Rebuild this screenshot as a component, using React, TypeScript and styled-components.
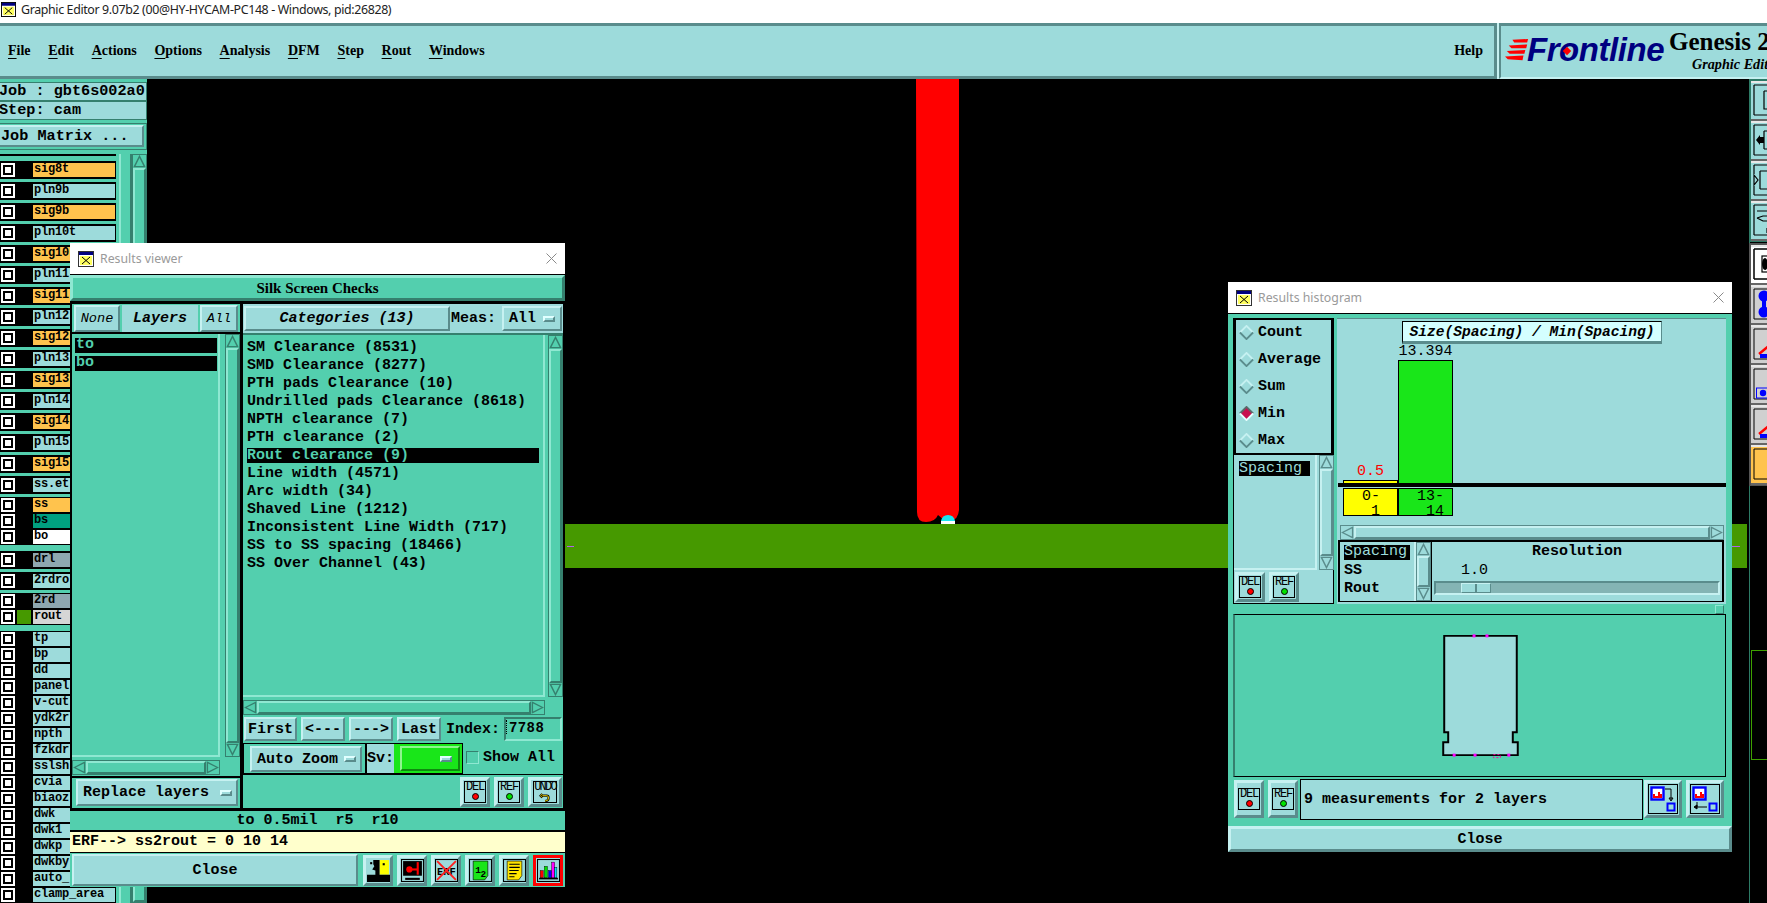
import type { ReactNode } from 'react';
import styled, { createGlobalStyle, css } from 'styled-components';

const PALE = '#9ddbdb';
const PALE_HI = '#c6f1f1';
const PALE_LO = '#5a8c8c';
const TEAL = '#53cfae';
const TEAL_HI = '#8fe8d2';
const TEAL_LO = '#35806e';
const MONO = '"Liberation Mono", monospace';
const SERIF = '"Liberation Serif", serif';

const raised = (hi: string, lo: string, w = 2) => css`
   border: ${w}px solid;
   border-color: ${hi} ${lo} ${lo} ${hi};
`;

type LayerRow = { name: string; fill: string; swatch?: string };

const ORANGE = '#ffc34d';
const SLATE = '#8ea7b0';

const layerGroups: { tight: boolean; rows: LayerRow[] }[] = [
   {
      tight: false,
      rows: [
         ['sig8t', ORANGE],
         ['pln9b', PALE],
         ['sig9b', ORANGE],
         ['pln10t', PALE],
         ['sig10', ORANGE],
         ['pln11', PALE],
         ['sig11', ORANGE],
         ['pln12', PALE],
         ['sig12', ORANGE],
         ['pln13', PALE],
         ['sig13', ORANGE],
         ['pln14', PALE],
         ['sig14', ORANGE],
         ['pln15', PALE],
         ['sig15', ORANGE],
         ['ss.et', PALE],
      ].map(([name, fill]) => ({ name, fill })),
   },
   {
      tight: true,
      rows: [
         { name: 'ss', fill: ORANGE },
         { name: 'bs', fill: '#00a080' },
         { name: 'bo', fill: '#ffffff' },
      ],
   },
   {
      tight: false,
      rows: [
         { name: 'drl', fill: SLATE },
         { name: '2rdro', fill: PALE },
      ],
   },
   {
      tight: true,
      rows: [
         { name: '2rd', fill: SLATE },
         { name: 'rout', fill: '#d6d6d6', swatch: '#469900' },
      ],
   },
   {
      tight: true,
      rows: [
         'tp', 'bp', 'dd', 'panel', 'v-cut', 'ydk2r', 'npth', 'fzkdr', 'sslsh',
         'cvia', 'biaoz', 'dwk', 'dwk1', 'dwkp', 'dwkby', 'auto_', 'clamp_area',
      ].map((name) => ({ name, fill: PALE })),
   },
];

const categories = [
   'SM Clearance (8531)',
   'SMD Clearance (8277)',
   'PTH pads Clearance (10)',
   'Undrilled pads Clearance (8618)',
   'NPTH clearance (7)',
   'PTH clearance (2)',
   'Rout clearance (9)',
   'Line width (4571)',
   'Arc width (34)',
   'Shaved Line (1212)',
   'Inconsistent Line Width (717)',
   'SS to SS spacing (18466)',
   'SS Over Channel (43)',
];

const menus = ['File', 'Edit', 'Actions', 'Options', 'Analysis', 'DFM', 'Step', 'Rout', 'Windows'];
const radios = ['Count', 'Average', 'Sum', 'Min', 'Max'];

export default function App() {
   return (
      <Screen>
         <GlobalStyle />
         <TitleBar>
            <AppIcon />
            <span>Graphic Editor 9.07b2 (00@HY-HYCAM-PC148 - Windows, pid:26828)</span>
         </TitleBar>

         <MenuRow>
            <MenuBar>
               {menus.map((m) => (
                  <MenuItem key={m}>
                     <u>{m[0]}</u>
                     {m.slice(1)}
                  </MenuItem>
               ))}
               <HelpItem>Help</HelpItem>
            </MenuBar>
            <LogoPanel>
               <LogoStripes />
               <LogoWord>Frontline</LogoWord>
               <LogoDot />
               <LogoProduct>
                  <strong>Genesis 2000</strong>
                  <em>Graphic Editor</em>
               </LogoProduct>
            </LogoPanel>
         </MenuRow>

         <Workspace>
            <LeftPanel>
               <JobBox>Job : gbt6s002a0</JobBox>
               <JobBox>Step: cam</JobBox>
               <MatrixWrap>
                  <MatrixButton>Job Matrix ...</MatrixButton>
               </MatrixWrap>
               <LayerArea>
                  <LayerList>
                     {layerGroups.map((g, i) => (
                        <LayerGroup key={i} $tight={g.tight}>
                           {g.rows.map((r) => (
                              <LayerItem key={r.name} $tight={g.tight}>
                                 <CheckBox />
                                 <SwatchSlot>{r.swatch && <Swatch $color={r.swatch} />}</SwatchSlot>
                                 <LayerLabel $fill={r.fill}>{r.name}</LayerLabel>
                              </LayerItem>
                           ))}
                        </LayerGroup>
                     ))}
                  </LayerList>
                  <LayerSash />
                  <LayerScroll>
                     <ArrowV up tone={TEAL} lo={TEAL_LO} />
                     <VThumb $hi={TEAL_HI} $lo={TEAL_LO} $bg={TEAL} />
                  </LayerScroll>
               </LayerArea>
            </LeftPanel>

            <Canvas>
               <BoardArt viewBox='147 79 1602 824'>
                  <rect x='500' y='524' width='1247' height='44' fill='#469900' />
                  <path d='M916 79H959V510Q958 520 951 520L944 519Q941 518 938 515Q935 522 926 522Q917 522 917 512Z' fill='#ff0000' />
                  <path d='M941 521Q942 515 948 515Q954 515 955 521Z' fill='#19e6f0' />
                  <rect x='941' y='521' width='14' height='3' fill='#ffffff' />
                  <rect x='567' y='546' width='7' height='1' fill='#b060f0' />
                  <rect x='1732' y='546' width='8' height='1' fill='#b060f0' />
               </BoardArt>
            </Canvas>

            <RightTools>
               <ToolGroup $edge='#2d7a66'>
                  {[0, 1, 2, 3].map((i) => (
                     <ToolButton key={i} $bg={PALE}>
                        <ToolGlyph kind={i} />
                     </ToolButton>
                  ))}
               </ToolGroup>
               <ToolGroup $edge='#555555'>
                  <ToolButton $bg='#ffffff'>
                     <ToolGlyph kind={4} />
                  </ToolButton>
                  <ToolButton $bg='#d0d0d0'>
                     <ToolGlyph kind={5} />
                  </ToolButton>
                  <ToolButton $bg='#d0d0d0'>
                     <ToolGlyph kind={6} />
                  </ToolButton>
                  <ToolButton $bg='#d0d0d0'>
                     <ToolGlyph kind={7} />
                  </ToolButton>
                  <ToolButton $bg='#d0d0d0'>
                     <ToolGlyph kind={6} />
                  </ToolButton>
                  <ToolButton $bg={ORANGE}>
                     <ToolGlyph kind={8} />
                  </ToolButton>
               </ToolGroup>
               <GreenOutline />
            </RightTools>
         </Workspace>

         <ViewerWindow>
            <WinTitle>
               <WinIcon />
               <span>Results viewer</span>
               <CloseX />
            </WinTitle>
            <ViewerHeader>Silk Screen Checks</ViewerHeader>
            <ViewerMain>
               <LayersColumn>
                  <LayersBar>
                     <SmallButton $w={46}>None</SmallButton>
                     <LayersTitle>Layers</LayersTitle>
                     <SmallButton $w={38}>All</SmallButton>
                  </LayersBar>
                  <LayersBody>
                     <SunkenList>
                        <SelectedLayer>to</SelectedLayer>
                        <SelectedLayer>bo</SelectedLayer>
                     </SunkenList>
                     <VScroll tone={TEAL} hi={TEAL_HI} lo={TEAL_LO} />
                     <HScroll tone={TEAL} hi={TEAL_HI} lo={TEAL_LO} />
                  </LayersBody>
                  <ReplaceRow>
                     <DropButton $bg={PALE}>
                        Replace layers
                        <DropMark />
                     </DropButton>
                  </ReplaceRow>
               </LayersColumn>

               <CategoryColumn>
                  <CategoryBar>
                     <CategoryTitle>Categories (13)</CategoryTitle>
                     <MeasLabel>Meas:</MeasLabel>
                     <MeasButton>
                        All
                        <DropMark />
                     </MeasButton>
                  </CategoryBar>
                  <CategoryBody>
                     <CategoryList>
                        {categories.map((c) => (
                           <CategoryItem key={c} $active={c.startsWith('Rout')}>
                              {c}
                           </CategoryItem>
                        ))}
                     </CategoryList>
                     <VScroll tone={TEAL} hi={TEAL_HI} lo={TEAL_LO} />
                     <HScroll tone={TEAL} hi={TEAL_HI} lo={TEAL_LO} />
                  </CategoryBody>
                  <NavRow>
                     <NavButton>First</NavButton>
                     <NavButton>&lt;---</NavButton>
                     <NavButton>---&gt;</NavButton>
                     <NavButton>Last</NavButton>
                     <IndexLabel>Index:</IndexLabel>
                     <IndexField>7788</IndexField>
                  </NavRow>
                  <ZoomRow>
                     <ZoomGroup>
                        <ZoomCell>
                           <DropButton $bg={PALE}>
                              Auto Zoom
                              <DropMark />
                           </DropButton>
                        </ZoomCell>
                        <SvLabel>Sv:</SvLabel>
                        <SvCell>
                           <SvButton>
                              <DropMark />
                           </SvButton>
                        </SvCell>
                     </ZoomGroup>
                     <ShowBox />
                     <ShowLabel>Show All</ShowLabel>
                  </ZoomRow>
                  <ActionRow>
                     <ActionButton label='DEL' dot='#ff0000' />
                     <ActionButton label='REF' dot='#00e000' />
                     <ActionButton label='UNDO' />
                  </ActionRow>
               </CategoryColumn>
            </ViewerMain>
            <StatusBand>to 0.5mil  r5  r10</StatusBand>
            <ErfBand>ERF--&gt; ss2rout = 0 10 14</ErfBand>
            <ViewerFooter>
               <FooterClose>Close</FooterClose>
               <IconButton><FaceIcon /></IconButton>
               <IconButton><ProbeIcon /></IconButton>
               <IconButton><ErfIcon /></IconButton>
               <IconButton><PageIcon /></IconButton>
               <IconButton><NoteIcon /></IconButton>
               <IconButton $active><BarsIcon /></IconButton>
            </ViewerFooter>
         </ViewerWindow>

         <HistogramWindow>
            <WinTitle>
               <WinIcon />
               <span>Results histogram</span>
               <CloseX />
            </WinTitle>
            <HistBody>
               <HistUpper>
                  <HistSide>
                     <RadioBox>
                        {radios.map((r) => (
                           <RadioRow key={r}>
                              <Diamond on={r === 'Min'} />
                              {r}
                           </RadioRow>
                        ))}
                     </RadioBox>
                     <SideList>
                        <SideListInner>
                           <SideSelected>Spacing</SideSelected>
                        </SideListInner>
                        <VScroll tone={PALE} hi={PALE_HI} lo={PALE_LO} />
                     </SideList>
                     <SideActions>
                        <ActionButton label='DEL' dot='#ff0000' />
                        <ActionButton label='REF' dot='#00e000' />
                     </SideActions>
                  </HistSide>

                  <HistMain>
                     <ChartTitle>Size(Spacing) / Min(Spacing)</ChartTitle>
                     <Plot>
                        <PlotColumn>
                           <PlotValue $color='#ff0000'>0.5</PlotValue>
                           <PlotBar $color='#ffff00' $h={3} />
                        </PlotColumn>
                        <PlotColumn>
                           <PlotValue $color='#000000'>13.394</PlotValue>
                           <PlotBar $color='#19e619' $h={123} />
                        </PlotColumn>
                     </Plot>
                     <Axis />
                     <BinRow>
                        <BinCell $color='#ffff00'>{'0-\n 1'}</BinCell>
                        <BinCell $color='#19e619'>{'13-\n 14'}</BinCell>
                     </BinRow>
                     <HistHScroll>
                        <HScroll tone={PALE} hi={PALE_HI} lo={PALE_LO} />
                     </HistHScroll>
                     <HistLower>
                        <ViewList>
                           <ViewSelected>Spacing</ViewSelected>
                           <ViewItem>SS</ViewItem>
                           <ViewItem>Rout</ViewItem>
                        </ViewList>
                        <VScroll tone={PALE} hi={PALE_HI} lo={PALE_LO} />
                        <ResolutionBox>
                           <ResolutionTitle>Resolution</ResolutionTitle>
                           <ResolutionValue>1.0</ResolutionValue>
                           <SliderTrack>
                              <SliderThumb />
                           </SliderTrack>
                        </ResolutionBox>
                     </HistLower>
                  </HistMain>
               </HistUpper>

               <Sash>
                  <SashHandle />
               </Sash>

               <Preview>
                  <PreviewArt viewBox='1233 615 492 162'>
                     <path
                        d='M1443 636H1516V733H1512V743H1517V756H1442V743H1447V733H1443Z'
                        fill={PALE}
                        stroke='#000000'
                        strokeWidth='2'
                     />
                     {[[1473, 636], [1486, 636], [1453, 756], [1474, 756], [1508, 756]].map(([x, y]) => (
                        <rect key={x} x={x - 1.5} y={y - 1.5} width='3' height='3' fill='#ff00ff' />
                     ))}
                     <rect x='1492.5' y='755.5' width='7' height='3' fill='none' stroke='#ff00a0' strokeWidth='1' strokeDasharray='2 2' />
                  </PreviewArt>
               </Preview>

               <HistStatus>
                  <ActionButton label='DEL' dot='#ff0000' tall />
                  <ActionButton label='REF' dot='#00e000' tall />
                  <MessageBox>9 measurements for 2 layers</MessageBox>
                  <IconButton $tall><SwapIcon dir='down' /></IconButton>
                  <IconButton $tall><SwapIcon dir='up' /></IconButton>
               </HistStatus>
            </HistBody>
            <HistClose>Close</HistClose>
         </HistogramWindow>
      </Screen>
   );
}

/* small drawings */

function AppIcon() {
   return (
      <WinIconSvg viewBox='0 0 16 16' $size={15}>
         <rect x='0.5' y='0.5' width='15' height='15' fill='#ffffff' stroke='#000000' />
         <rect x='1' y='1' width='14' height='3' fill='#000080' />
         <rect x='2' y='5' width='12' height='9' fill='#ffff60' />
         <path d='M4 6L12 13M12 6L4 13' stroke='#000000' strokeWidth='1' />
      </WinIconSvg>
   );
}

function WinIcon() {
   return (
      <WinIconSvg viewBox='0 0 16 16' $size={16}>
         <rect x='0.5' y='0.5' width='15' height='15' fill='#ffffff' stroke='#333333' />
         <rect x='1' y='1' width='14' height='3' fill='#000080' />
         <rect x='2' y='5' width='12' height='9' fill='#ffff60' />
         <path d='M4 6L12 13M12 6L4 13' stroke='#000000' strokeWidth='1' />
      </WinIconSvg>
   );
}

function CloseX() {
   return (
      <CloseSvg viewBox='0 0 11 11'>
         <path d='M0.5 0.5L10.5 10.5M10.5 0.5L0.5 10.5' stroke='#8a8a8a' strokeWidth='1' fill='none' />
      </CloseSvg>
   );
}

function LogoStripes() {
   return (
      <StripeSvg viewBox='0 0 26 24'>
         <path d='M8 1L25 0L24 4L10 4Z M4 7L24 6L23 10L7 10Z M2 13L22 12L21 16L5 16Z M0 19L20 18L19 23L3 22Z' fill='#ff0000' />
      </StripeSvg>
   );
}

function ArrowV({ up, tone, lo }: { up?: boolean; tone: string; lo: string }) {
   return (
      <ArrowSvgV viewBox='0 0 14 14' $tone={tone}>
         <path
            d={up ? 'M7 1.5L12.5 12.5H1.5Z' : 'M7 12.5L1.5 1.5H12.5Z'}
            fill={tone}
            stroke={lo}
            strokeWidth='1.5'
         />
      </ArrowSvgV>
   );
}

function ArrowH({ left, tone, lo }: { left?: boolean; tone: string; lo: string }) {
   return (
      <ArrowSvgH viewBox='0 0 14 14' $tone={tone}>
         <path
            d={left ? 'M1.5 7L12.5 1.5V12.5Z' : 'M12.5 7L1.5 1.5V12.5Z'}
            fill={tone}
            stroke={lo}
            strokeWidth='1.5'
         />
      </ArrowSvgH>
   );
}

type ScrollProps = { tone: string; hi: string; lo: string };

function VScroll({ tone, hi, lo }: ScrollProps) {
   return (
      <VScrollBox $bg={tone} $lo={lo}>
         <ArrowV up tone={tone} lo={lo} />
         <VThumb $hi={hi} $lo={lo} $bg={tone} />
         <ArrowV tone={tone} lo={lo} />
      </VScrollBox>
   );
}

function HScroll({ tone, hi, lo }: ScrollProps) {
   return (
      <HScrollBox $bg={tone} $lo={lo}>
         <ArrowH left tone={tone} lo={lo} />
         <HThumb $hi={hi} $lo={lo} $bg={tone} />
         <ArrowH tone={tone} lo={lo} />
      </HScrollBox>
   );
}

function Diamond({ on }: { on: boolean }) {
   return (
      <DiamondSvg viewBox='0 0 16 16'>
         <path d='M8 1L15 8L8 15L1 8Z' fill={on ? '#c8104e' : PALE} />
         <path d='M1 8L8 1L15 8' fill='none' stroke={on ? '#5a6a6a' : PALE_HI} strokeWidth='2' />
         <path d='M1 8L8 15L15 8' fill='none' stroke={on ? '#e8ffff' : PALE_LO} strokeWidth='2' />
      </DiamondSvg>
   );
}

function ActionButton({ label, dot, tall }: { label: string; dot?: string; tall?: boolean }) {
   return (
      <ActionOuter $tall={tall} $wide={label === 'UNDO'}>
         <ActionInner>
            <ActionText $tight={label === 'UNDO'}>{label}</ActionText>
            {dot ? (
               <ActionDot $color={dot} />
            ) : (
               <svg width='12' height='10' viewBox='0 0 12 10'>
                  <path d='M3 3H8Q10 3 10 5.5Q10 9 6 9M3 1L1 3L3 5' fill='none' stroke='#000000' strokeWidth='2.4' />
                  <path d='M3 3H8Q10 3 10 5.5Q10 9 6 9M3 1L1 3L3 5' fill='none' stroke='#ffe000' strokeWidth='1' />
               </svg>
            )}
         </ActionInner>
      </ActionOuter>
   );
}

function FaceIcon() {
   return (
      <IconSvg viewBox='0 0 22 22'>
         <rect x='0' y='0' width='22' height='15' fill={PALE} />
         <rect x='12' y='1' width='9' height='14' fill='#ffff00' />
         <path d='M6 1H12V15H8V11L5 10L7 7L6 5Z M0 15H22V22H0Z' fill='#000000' />
         <rect x='3' y='3' width='2' height='2' fill='#000000' />
         <rect x='15' y='4' width='2' height='2' fill='#000000' />
      </IconSvg>
   );
}

function ProbeIcon() {
   return (
      <IconSvg viewBox='0 0 22 22'>
         <rect x='0.5' y='0.5' width='21' height='21' fill={PALE} stroke='#000000' />
         <rect x='2' y='2' width='18' height='14' fill='#000000' />
         <circle cx='8' cy='10' r='3' fill='#ff0000' />
         <rect x='8' y='9' width='8' height='2' fill='#ff0000' />
         <rect x='15' y='3' width='2' height='12' fill='#ff0000' />
         <rect x='4' y='18' width='14' height='2' fill='#000000' />
      </IconSvg>
   );
}

function ErfIcon() {
   return (
      <IconSvg viewBox='0 0 22 22'>
         <rect x='0.5' y='0.5' width='21' height='21' fill={PALE} stroke='#000000' />
         <IconText x='11' y='15' fontSize='10' textAnchor='middle'>ERF</IconText>
         <path d='M2 2L20 20M20 2L2 20' stroke='#ff2020' strokeWidth='1.8' />
      </IconSvg>
   );
}

function PageIcon() {
   return (
      <IconSvg viewBox='0 0 22 22'>
         <rect x='0.5' y='0.5' width='21' height='21' fill={PALE} stroke='#000000' />
         <path d='M4 2H18V16L15 20H4Z' fill='#19e619' stroke='#000000' strokeWidth='0.6' />
         <IconText x='6' y='13' fontSize='9' fontWeight='700'>1</IconText>
         <IconText x='11' y='17' fontSize='9' fontWeight='700'>2</IconText>
      </IconSvg>
   );
}

function NoteIcon() {
   return (
      <IconSvg viewBox='0 0 22 22'>
         <rect x='0.5' y='0.5' width='21' height='21' fill={PALE} stroke='#000000' />
         <path d='M4 2H18V16L15 20H4Z' fill='#ffe600' stroke='#000000' strokeWidth='0.6' />
         <path d='M6 5H16M6 8H16M6 11H15M6 14H13M6 17H11' stroke='#000000' strokeWidth='1' />
      </IconSvg>
   );
}

function BarsIcon() {
   return (
      <IconSvg viewBox='0 0 22 22'>
         <rect x='0.5' y='0.5' width='21' height='21' fill={PALE} stroke='#000000' />
         <rect x='3' y='11' width='3' height='7' fill='#ff0000' stroke='#000000' strokeWidth='0.4' />
         <rect x='7' y='7' width='3' height='11' fill='#00e000' stroke='#000000' strokeWidth='0.4' />
         <rect x='11' y='11' width='3' height='7' fill='#0000ff' stroke='#000000' strokeWidth='0.4' />
         <rect x='14' y='3' width='3' height='15' fill='#ff00ff' stroke='#000000' strokeWidth='0.4' />
         <rect x='17' y='8' width='2' height='10' fill='#00e0ff' stroke='#000000' strokeWidth='0.4' />
         <rect x='2' y='18' width='18' height='1.5' fill='#000000' />
      </IconSvg>
   );
}

function SwapIcon({ dir }: { dir: 'down' | 'up' }) {
   return (
      <SwapSvg viewBox='0 0 30 30'>
         <rect x='0.5' y='0.5' width='29' height='29' fill={PALE} stroke='#000000' />
         <rect x='3.5' y='3.5' width='12' height='12' fill='#ffffff' stroke='#0000ff' strokeWidth='2.4' />
         <path d='M5 14V10H7V12H10V8H12V10H14V14Z' fill='#ff0000' />
         <rect x='19.5' y='19.5' width='7' height='7' fill='none' stroke='#0000ff' strokeWidth='2' />
         {dir === 'down' ? (
            <path d='M17 5H23V16M21 14H25L23 17Z' fill='none' stroke='#000000' strokeWidth='1' />
         ) : (
            <path d='M7 23H17M7 21V25L4 23Z M7 18V23' fill='#000000' stroke='#000000' strokeWidth='1' />
         )}
      </SwapSvg>
   );
}

function ToolGlyph({ kind }: { kind: number }) {
   const glyphs: ReactNode[] = [
      <path key='a' d='M1 1H18M1 1V31M1 31H18M11 7H18M11 7V25H18' fill='none' stroke='#000000' strokeWidth='1.2' />,
      <g key='b'>
         <path d='M1 1H18M1 31H18M1 1V31M11 7H18M11 25H18M11 7V25' fill='none' stroke='#000000' strokeWidth='1.2' />
         <path d='M3 16L7 11V13H11V19H7V21Z' fill='#000000' />
      </g>,
      <path key='c' d='M1 1H18M1 31H18M1 1V10M1 22V31M7 7H18M7 25H18M7 7V25M1 11L5 16L1 21Z' fill='none' stroke='#000000' strokeWidth='1.2' />,
      <path key='d' d='M1 1H18M1 31H18M1 1V31M4 7H18M4 14L10 12H18M4 14L10 17H18M14 24V29' fill='none' stroke='#000000' strokeWidth='1.2' />,
      <g key='e'>
         <path d='M1 1H18M1 31H18M1 1V31' fill='none' stroke='#000000' strokeWidth='1.5' />
         <rect x='9' y='8' width='9' height='16' fill='none' stroke='#000000' strokeWidth='1.2' />
         <ellipse cx='12' cy='16' rx='3' ry='6' fill='#000000' />
      </g>,
      <g key='f'>
         <path d='M1 1H18M1 31H18M1 1V31' fill='none' stroke='#000000' strokeWidth='1' />
         <circle cx='11' cy='8' r='5.5' fill='#0000ff' />
         <circle cx='11' cy='24' r='5.5' fill='#0000ff' />
         <rect x='9' y='8' width='4' height='16' fill='#0000ff' />
      </g>,
      <g key='g'>
         <path d='M1 1H18M1 31H18M1 1V31' fill='none' stroke='#000000' strokeWidth='1' />
         <path d='M6 26L18 16' stroke='#ff0000' strokeWidth='2.4' />
         <rect x='7' y='26' width='11' height='4' fill='#0000ff' />
      </g>,
      <g key='h'>
         <path d='M1 1H18M1 31H18M1 1V31' fill='none' stroke='#000000' strokeWidth='1' />
         <rect x='3.5' y='20' width='15' height='10' fill='none' stroke='#0000ff' strokeWidth='1' />
         <circle cx='10' cy='25' r='3.2' fill='#0000ff' />
      </g>,
      <g key='i'>
         <path d='M1 1H18M1 31H18M1 1V31' fill='none' stroke='#000000' strokeWidth='1' />
         <rect x='14' y='9' width='3' height='12' fill='#000000' />
      </g>,
   ];
   return <ToolSvg viewBox='0 0 18 34'>{glyphs[kind]}</ToolSvg>;
}

/* page */

const GlobalStyle = createGlobalStyle`
   * {
      box-sizing: border-box;
   }

   html,
   body {
      margin: 0;
      background: #000000;
      overflow: hidden;
   }
`;

const Screen = styled.div`
   position: relative;
   width: 1767px;
   height: 903px;
   display: flex;
   flex-direction: column;
   overflow: hidden;
   background: #000000;
   font-family: ${MONO};
   font-weight: 700;
   color: #000000;
`;

const TitleBar = styled.header`
   height: 23px;
   flex: none;
   display: flex;
   align-items: center;
   gap: 5px;
   padding: 0 0 5px 1px;
   background: #ffffff;
   font-family: 'Noto Sans', sans-serif;
   font-size: 12.4px;
   font-weight: 400;
   letter-spacing: -0.36px;
   color: #222222;
`;

const WinIconSvg = styled.svg<{ $size: number }>`
   width: ${(p) => p.$size}px;
   height: ${(p) => p.$size}px;
   flex: none;
`;

const MenuRow = styled.div`
   height: 56px;
   flex: none;
   display: flex;
   background: ${PALE_HI};
`;

const MenuBar = styled.nav`
   width: 1497px;
   flex: none;
   display: flex;
   align-items: center;
   gap: 17.7px;
   padding: 0 11px 0 8px;
   background: ${PALE};
   border: 3px solid ${PALE_LO};
   border-left: 0;
   border-bottom-width: 3px;
   font-family: ${SERIF};
   font-size: 14px;
   font-weight: 700;
`;

const MenuItem = styled.span`
   u {
      text-underline-offset: 3px;
      text-decoration-thickness: 1px;
   }
`;

const HelpItem = styled.span`
   margin-left: auto;
`;

const LogoPanel = styled.div`
   position: relative;
   flex: 1;
   display: flex;
   align-items: center;
   margin-left: 2px;
   padding-left: 4px;
   overflow: hidden;
   background: ${PALE};
   border-top: 3px solid ${PALE_LO};
   border-left: 2px solid ${PALE_LO};
   border-bottom: 2px solid ${PALE_HI};
`;

const StripeSvg = styled.svg`
   width: 24px;
   height: 24px;
   flex: none;
   margin-bottom: 3px;
`;

const LogoWord = styled.span`
   width: 141px;
   flex: none;
   margin: 0 0 3px -2px;
   font-family: 'Liberation Sans', sans-serif;
   font-size: 33px;
   font-weight: 700;
   font-style: italic;
   letter-spacing: -0.45px;
   color: #000080;
   white-space: nowrap;
`;

const LogoDot = styled.i`
   position: absolute;
   left: 63px;
   top: 22px;
   width: 6px;
   height: 6px;
   background: #ff0000;
   transform: rotate(45deg);
`;

const LogoProduct = styled.div`
   flex: none;
   margin: 0 0 2px 1px;
   font-family: ${SERIF};
   white-space: nowrap;

   strong {
      display: block;
      font-size: 25px;
      line-height: 26px;
   }

   em {
      display: block;
      margin-left: 23px;
      font-size: 14.2px;
      line-height: 18px;
      font-weight: 700;
   }
`;

const Workspace = styled.main`
   flex: 1;
   display: flex;
   min-height: 0;
`;

/* left layer panel */

const LeftPanel = styled.aside`
   width: 147px;
   flex: none;
   display: flex;
   flex-direction: column;
   padding-top: 3px;
   overflow: hidden;
   background: ${TEAL};
`;

const JobBox = styled.div`
   height: 19px;
   flex: none;
   padding-left: 0;
   text-indent: -1px;
   background: ${PALE};
   border: 1px solid ${TEAL_LO};
   border-left: 0;
   font-size: 15.2px;
   line-height: 17px;
   white-space: pre;
`;

const MatrixWrap = styled.div`
   height: 27px;
   flex: none;
   margin-top: 3px;
   padding: 1px 2px 2px 0;
   border: 1px solid ${TEAL_LO};
   border-left: 0;
`;

const MatrixButton = styled.div`
   height: 100%;
   padding-left: 1px;
   background: ${PALE};
   ${raised(PALE_HI, PALE_LO)}
   border-left: 0;
   font-size: 15.2px;
   line-height: 19px;
`;

const LayerArea = styled.div`
   flex: 1;
   min-height: 0;
   display: flex;
   margin-top: 4px;
`;

const LayerList = styled.div`
   width: 116px;
   flex: none;
   display: flex;
   flex-direction: column;
   gap: 3px;
   padding-top: 5px;
   border-top: 2px solid #000000;
`;

const LayerGroup = styled.div<{ $tight: boolean }>`
   display: flex;
   flex-direction: column;
   gap: ${(p) => (p.$tight ? 0 : 3)}px;
   margin-bottom: ${(p) => (p.$tight ? 3 : 0)}px;
`;

const LayerItem = styled.div<{ $tight: boolean }>`
   height: ${(p) => (p.$tight ? 16 : 18)}px;
   flex: none;
   display: flex;
   align-items: center;
   padding-left: 1px;
   background: #000000;
`;

const CheckBox = styled.span`
   width: 14px;
   height: 14px;
   flex: none;
   background: #ffffff;
   border: 2px solid #ffffff;
   box-shadow: inset 0 0 0 2px #000000;
`;

const SwatchSlot = styled.span`
   width: 18px;
   height: 100%;
   flex: none;
   display: flex;
   align-items: center;
   padding-left: 2px;
`;

const Swatch = styled.span<{ $color: string }>`
   width: 14px;
   height: 14px;
   background: ${(p) => p.$color};
`;

const LayerLabel = styled.span<{ $fill: string }>`
   flex: 1;
   height: 14px;
   margin-right: 1px;
   overflow: hidden;
   padding-left: 1px;
   background: ${(p) => p.$fill};
   font-size: 12px;
   line-height: 13px;
   letter-spacing: -0.2px;
   white-space: nowrap;
`;

const LayerSash = styled.div`
   width: 13px;
   flex: none;
   margin-left: 3px;
   background: ${TEAL};
   border-left: 2px solid ${TEAL_HI};
   border-right: 2px solid ${TEAL_LO};
`;

const LayerScroll = styled.div`
   flex: 1;
   display: flex;
   flex-direction: column;
   background: #45b094;
   border: 1px solid ${TEAL_LO};
`;

/* canvas */

const Canvas = styled.div`
   position: relative;
   flex: 1;
   min-width: 0;
   background: #000000;
`;

const BoardArt = styled.svg`
   position: absolute;
   inset: 0;
   width: 100%;
   height: 100%;
`;

/* right tool column */

const RightTools = styled.aside`
   width: 18px;
   flex: none;
   display: flex;
   flex-direction: column;
   background: #000000;
   border-left: 1px solid #2d7a66;
`;

const ToolGroup = styled.div<{ $edge: string }>`
   flex: none;
   display: flex;
   flex-direction: column;
   margin-left: -1px;
   padding: 2px 0 1px 2px;
   background: ${(p) => p.$edge};
   margin-bottom: 1px;
`;

const ToolButton = styled.div<{ $bg: string }>`
   height: 40px;
   display: flex;
   align-items: center;
   padding-left: 2px;
   background: ${(p) => p.$bg};
   border-top: 2px solid #e8e8e8;
   border-bottom: 2px solid #666666;
`;

const ToolSvg = styled.svg`
   width: 18px;
   height: 34px;
   flex: none;
`;

const GreenOutline = styled.div`
   height: 110px;
   margin-top: 163px;
   margin-left: 1px;
   border: 1px solid #3ea000;
   border-right: 0;
`;

/* floating windows */

const ViewerWindow = styled.section`
   position: absolute;
   left: 70px;
   top: 243px;
   width: 495px;
   height: 644px;
   display: flex;
   flex-direction: column;
   background: #000000;
`;

const HistogramWindow = styled.section`
   position: absolute;
   left: 1228px;
   top: 282px;
   width: 504px;
   height: 570px;
   display: flex;
   flex-direction: column;
   background: #000000;
`;

const WinTitle = styled.div`
   height: 31px;
   flex: none;
   display: flex;
   align-items: center;
   gap: 6px;
   padding: 0 8px;
   background: #ffffff;
   font-family: 'Noto Sans', sans-serif;
   font-size: 12.3px;
   font-weight: 400;
   color: #9a9a9a;
`;

const CloseSvg = styled.svg`
   width: 11px;
   height: 11px;
   margin-left: auto;
`;

const ViewerHeader = styled.div`
   height: 26px;
   flex: none;
   margin-top: 1px;
   display: flex;
   align-items: center;
   justify-content: center;
   background: ${TEAL};
   ${raised(TEAL_HI, TEAL_LO, 3)}
   font-family: ${SERIF};
   font-size: 15px;
`;

const ViewerMain = styled.div`
   height: 504px;
   flex: none;
   margin-top: 3px;
   display: grid;
   grid-template-columns: 168px 320px;
   gap: 3px;
   padding: 0 2px;
   background: #000000;
`;

const LayersColumn = styled.div`
   display: flex;
   flex-direction: column;
   background: ${TEAL};
`;

const LayersBar = styled.div`
   height: 30px;
   flex: none;
   display: flex;
   align-items: stretch;
   background: ${TEAL};
   border-bottom: 2px solid #000000;
   padding-top: 1px;
`;

const SmallButton = styled.div<{ $w: number }>`
   width: ${(p) => p.$w}px;
   flex: none;
   display: flex;
   align-items: center;
   justify-content: center;
   margin-left: 2px;
   background: ${PALE};
   ${raised(PALE_HI, PALE_LO)}
   font-weight: 400;
   font-style: italic;
   font-size: 13.6px;
`;

const LayersTitle = styled.div`
   width: 76px;
   flex: none;
   margin-left: 2px;
   display: flex;
   align-items: center;
   justify-content: center;
   background: ${PALE};
   font-style: italic;
   font-size: 15px;
`;

const LayersBody = styled.div`
   height: 442px;
   flex: none;
   display: grid;
   grid-template-columns: 148px 15px;
   grid-template-rows: 423px 15px;
   column-gap: 5px;
   row-gap: 3px;
   padding: 0 0 1px 0;
`;

const SunkenList = styled.div`
   display: flex;
   flex-direction: column;
   gap: 3px;
   padding: 4px 1px 4px 3px;
   background: ${TEAL};
   border-right: 2px solid ${TEAL_HI};
   border-bottom: 2px solid ${TEAL_HI};
`;

const SelectedLayer = styled.div`
   height: 15px;
   flex: none;
   padding-left: 1px;
   background: #000000;
   color: ${TEAL};
   font-size: 15px;
   line-height: 14px;
`;

const VScrollBox = styled.div<{ $bg: string; $lo: string }>`
   display: flex;
   flex-direction: column;
   align-items: stretch;
   min-height: 0;
   background: ${(p) => p.$bg};
   border: 1px solid ${(p) => p.$lo};
`;

const HScrollBox = styled.div<{ $bg: string; $lo: string }>`
   display: flex;
   align-items: stretch;
   min-width: 0;
   height: 15px;
   background: ${(p) => p.$bg};
   border: 1px solid ${(p) => p.$lo};
`;

const VThumb = styled.div<{ $hi: string; $lo: string; $bg: string }>`
   flex: 1;
   min-height: 0;
   background: ${(p) => p.$bg};
   ${(p) => raised(p.$hi, p.$lo)}
`;

const HThumb = styled.div<{ $hi: string; $lo: string; $bg: string }>`
   flex: 1;
   min-width: 0;
   background: ${(p) => p.$bg};
   ${(p) => raised(p.$hi, p.$lo)}
`;

const ArrowSvgV = styled.svg<{ $tone: string }>`
   width: 100%;
   height: 13px;
   flex: none;
   background: ${(p) => p.$tone};
`;

const ArrowSvgH = styled.svg<{ $tone: string }>`
   width: 13px;
   height: 100%;
   flex: none;
   background: ${(p) => p.$tone};
`;

const ReplaceRow = styled.div`
   flex: 1;
   min-height: 0;
   padding: 1px 2px 2px 4px;
   border-top: 2px solid #000000;
`;

const DropButton = styled.div<{ $bg: string }>`
   height: 100%;
   display: flex;
   align-items: center;
   justify-content: space-between;
   padding: 0 4px 0 5px;
   background: ${(p) => p.$bg};
   ${raised(PALE_HI, PALE_LO)}
   font-size: 15px;
   white-space: pre;
`;

const DropMark = styled.i`
   width: 12px;
   height: 6px;
   flex: none;
   background: ${PALE};
   ${raised('#e0ffff', PALE_LO)}
`;

const CategoryColumn = styled.div`
   display: flex;
   flex-direction: column;
   background: ${TEAL};
`;

const CategoryBar = styled.div`
   height: 31px;
   flex: none;
   display: flex;
   align-items: stretch;
   padding: 2px 1px 2px 1px;
   background: ${PALE};
   border-bottom: 2px solid ${TEAL_LO};
`;

const CategoryTitle = styled.div`
   width: 206px;
   flex: none;
   display: flex;
   align-items: center;
   justify-content: center;
   background: ${PALE};
   ${raised(PALE_HI, PALE_LO)}
   font-style: italic;
   font-size: 15px;
`;

const MeasLabel = styled.div`
   width: 52px;
   flex: none;
   display: flex;
   align-items: center;
   padding-left: 1px;
   font-size: 15px;
`;

const MeasButton = styled.div`
   flex: 1;
   display: flex;
   align-items: center;
   justify-content: space-between;
   padding: 0 5px;
   background: ${PALE};
   ${raised(PALE_HI, PALE_LO)}
   font-size: 15px;
`;

const CategoryBody = styled.div`
   height: 380px;
   flex: none;
   display: grid;
   grid-template-columns: 302px 15px;
   grid-template-rows: 362px 15px;
   column-gap: 3px;
   row-gap: 3px;
`;

const CategoryList = styled.div`
   display: flex;
   flex-direction: column;
   padding: 4px 4px 0;
   background: ${TEAL};
   border-right: 2px solid ${TEAL_HI};
   border-bottom: 2px solid ${TEAL_HI};
`;

const CategoryItem = styled.div<{ $active: boolean }>`
   height: 18px;
   flex: none;
   padding-top: 1px;
   font-size: 15px;
   line-height: 16px;
   white-space: pre;
   ${(p) =>
      p.$active &&
      css`
         height: 15px;
         margin: 1px 0 2px;
         padding-top: 0;
         line-height: 15px;
         background: #000000;
         color: ${TEAL};
      `}
`;

const NavRow = styled.div`
   height: 24px;
   flex: none;
   margin-top: 2px;
   display: flex;
   align-items: stretch;
   padding-left: 1px;
`;

const NavButton = styled.div`
   width: 44px;
   flex: none;
   margin-right: 4px;
   display: flex;
   align-items: center;
   justify-content: center;
   background: ${PALE};
   ${raised(PALE_HI, PALE_LO)}
   font-size: 15px;

   &:first-child {
      width: 53px;
   }
`;

const IndexLabel = styled.div`
   width: 58px;
   flex: none;
   margin-left: 1px;
   display: flex;
   align-items: center;
   font-size: 15px;
`;

const IndexField = styled.div`
   flex: 1;
   margin-right: 1px;
   padding: 1px 0 0 0;
   background: ${TEAL};
   ${raised(TEAL_LO, TEAL_HI)}
   font-size: 14px;
   letter-spacing: 0.4px;
   line-height: 17px;

   &::before {
      content: '';
      display: inline-block;
      width: 1px;
      height: 14px;
      margin-right: 1px;
      vertical-align: -2px;
      border-left: 1px dotted #000000;
   }
`;

const ZoomRow = styled.div`
   height: 31px;
   flex: none;
   margin-top: 2px;
   display: flex;
   align-items: center;
`;

const ZoomGroup = styled.div`
   width: 220px;
   height: 100%;
   flex: none;
   display: flex;
   background: ${PALE};
   border: 1px solid #000000;
   margin-right: 3px;
`;

const ZoomCell = styled.div`
   width: 123px;
   flex: none;
   padding: 2px 3px 1px 6px;
   background: ${TEAL};
   border-right: 2px solid #000000;
`;

const SvLabel = styled.div`
   width: 27px;
   flex: none;
   display: flex;
   align-items: center;
   font-size: 15px;
`;

const SvCell = styled.div`
   flex: 1;
   padding: 2px 2px 2px 6px;
   background: #19e619;
`;

const SvButton = styled.div`
   height: 100%;
   display: flex;
   align-items: center;
   justify-content: flex-end;
   padding-right: 6px;
   background: #19e619;
   ${raised('#8ff58f', '#0e8a0e')}
`;

const ShowBox = styled.i`
   width: 13px;
   height: 13px;
   flex: none;
   margin-bottom: 3px;
   background: ${TEAL};
   ${raised(TEAL_LO, TEAL_HI, 1)}
`;

const ShowLabel = styled.span`
   margin: 0 0 3px 4px;
   font-size: 15px;
   white-space: pre;
`;

const ActionRow = styled.div`
   flex: 1;
   min-height: 0;
   display: flex;
   justify-content: flex-end;
   align-items: center;
   gap: 4px;
   padding-right: 1px;
   border-top: 1px solid #000000;
`;

const ActionOuter = styled.div<{ $tall?: boolean; $wide?: boolean }>`
   width: ${(p) => (p.$wide ? 34 : 30)}px;
   height: ${(p) => (p.$tall ? 38 : 30)}px;
   flex: none;
   display: flex;
   align-items: center;
   justify-content: center;
   background: ${PALE};
   ${raised(PALE_HI, PALE_LO, 3)}
`;

const ActionInner = styled.div`
   min-width: 22px;
   height: 22px;
   display: flex;
   flex-direction: column;
   align-items: center;
   border: 1px solid #000000;
`;

const ActionText = styled.span<{ $tight: boolean }>`
   font-size: 12px;
   line-height: 11px;
   font-weight: 400;
   letter-spacing: ${(p) => (p.$tight ? -1.8 : -1.2)}px;
`;

const ActionDot = styled.i<{ $color: string }>`
   width: 7px;
   height: 7px;
   border-radius: 50%;
   background: ${(p) => p.$color};
   border: 1px solid #000000;
`;

const StatusBand = styled.div`
   height: 19px;
   flex: none;
   margin-top: 3px;
   display: flex;
   align-items: center;
   justify-content: center;
   background: ${TEAL};
   font-size: 15px;
   white-space: pre;
`;

const ErfBand = styled.div`
   height: 20px;
   flex: none;
   margin-top: 2px;
   padding-left: 2px;
   background: #ffffcc;
   font-size: 15px;
   line-height: 19px;
   white-space: pre;
`;

const ViewerFooter = styled.div`
   flex: 1;
   min-height: 0;
   margin-top: 1px;
   display: flex;
   align-items: center;
   gap: 4px;
   padding: 0 2px;
   background: ${TEAL};
`;

const FooterClose = styled.div`
   width: 286px;
   height: 32px;
   flex: none;
   margin-right: 1px;
   display: flex;
   align-items: center;
   justify-content: center;
   background: ${PALE};
   ${raised(PALE_HI, PALE_LO)}
   font-size: 15px;
`;

const IconButton = styled.div<{ $active?: boolean; $tall?: boolean }>`
   width: ${(p) => (p.$tall ? 38 : 30)}px;
   height: ${(p) => (p.$tall ? 38 : 31)}px;
   flex: none;
   display: flex;
   align-items: center;
   justify-content: center;
   background: ${PALE};
   ${(p) => (p.$active ? raised('#ff0000', '#ff0000', 3) : raised(PALE_HI, PALE_LO, 3))}
`;

const IconSvg = styled.svg`
   width: 23px;
   height: 23px;
`;

const IconText = styled.text`
   font-family: ${MONO};
   fill: #000000;
`;

const SwapSvg = styled.svg`
   width: 30px;
   height: 30px;
`;

/* histogram */

const HistBody = styled.div`
   flex: 1;
   min-height: 0;
   display: flex;
   flex-direction: column;
   padding: 4px 4px 0 5px;
   background: ${TEAL};
   border-top: 1px solid #000000;
`;

const HistUpper = styled.div`
   height: 286px;
   flex: none;
   display: grid;
   grid-template-columns: 101px 389px;
   gap: 3px;
`;

const HistSide = styled.div`
   display: flex;
   flex-direction: column;
   background: ${PALE};
   border: 1px solid #000000;
   border-top: 0;
`;

const RadioBox = styled.div`
   height: 137px;
   flex: none;
   display: flex;
   flex-direction: column;
   padding-left: 3px;
   border: 2px solid #000000;
`;

const RadioRow = styled.div`
   height: 27px;
   flex: none;
   display: flex;
   align-items: center;
   gap: 4px;
   padding-bottom: 2px;
   font-size: 15px;
`;

const DiamondSvg = styled.svg`
   width: 15px;
   height: 15px;
   flex: none;
`;

const SideList = styled.div`
   height: 115px;
   flex: none;
   display: grid;
   grid-template-columns: 83px 15px;
   gap: 2px;
   padding-right: 0;
`;

const SideListInner = styled.div`
   padding: 6px 5px;
   border-right: 2px solid ${PALE_HI};
   border-bottom: 2px solid ${PALE_HI};
`;

const SideSelected = styled.div`
   height: 15px;
   background: #000000;
   color: ${PALE};
   font-size: 15px;
   line-height: 15px;
   font-weight: 400;
`;

const SideActions = styled.div`
   flex: 1;
   display: flex;
   align-items: center;
   gap: 4px;
   padding-left: 1px;
`;

const HistMain = styled.div`
   display: flex;
   flex-direction: column;
   background: ${PALE};
   border-top: 1px solid #5a8c8c;
   padding-left: 1px;
`;

const ChartTitle = styled.div`
   width: 260px;
   height: 23px;
   flex: none;
   margin: 2px 0 0 64px;
   background: #d4ffff;
   border: 1px solid #000000;
   border-right-color: #5a8c8c;
   border-bottom: 3px solid #5a8c8c;
   display: flex;
   align-items: center;
   justify-content: center;
   font-style: italic;
   font-size: 14.6px;
   white-space: pre;
`;

const Plot = styled.div`
   height: 139px;
   flex: none;
   display: flex;
   align-items: flex-end;
   padding-left: 5px;
`;

const PlotColumn = styled.div`
   width: 55px;
   flex: none;
   display: flex;
   flex-direction: column;
   align-items: center;
`;

const PlotValue = styled.span<{ $color: string }>`
   height: 15px;
   font-size: 15px;
   line-height: 14px;
   font-weight: 400;
   color: ${(p) => p.$color};
`;

const PlotBar = styled.div<{ $color: string; $h: number }>`
   width: 100%;
   height: ${(p) => p.$h}px;
   background: ${(p) => p.$color};
   border: 1px solid #000000;
   border-bottom: 0;
`;

const Axis = styled.div`
   height: 4px;
   flex: none;
   background: #000000;
`;

const BinRow = styled.div`
   height: 28px;
   flex: none;
   margin-top: 1px;
   display: flex;
   padding-left: 5px;
`;

const BinCell = styled.div<{ $color: string }>`
   width: 55px;
   flex: none;
   padding-left: 18px;
   background: ${(p) => p.$color};
   border: 1px solid #000000;
   font-size: 15px;
   line-height: 15px;
   font-weight: 400;
   white-space: pre;
   overflow: visible;
`;

const HistHScroll = styled.div`
   height: 15px;
   flex: none;
   margin: 9px 2px 0;
`;

const HistLower = styled.div`
   height: 62px;
   flex: none;
   display: grid;
   grid-template-columns: 76px 15px 1fr;
   background: #000000;
   border: 2px solid #000000;
   margin: 0 2px 0 0;
`;

const ViewList = styled.div`
   padding: 3px 4px;
   background: ${PALE};
   border-right: 2px solid ${PALE_HI};
   font-size: 15px;
   line-height: 18px;
`;

const ViewSelected = styled.div`
   height: 15px;
   margin-bottom: 2px;
   background: #000000;
   color: ${PALE};
   line-height: 14px;
   font-weight: 400;
   white-space: nowrap;
`;

const ViewItem = styled.div`
   height: 18px;
`;

const ResolutionBox = styled.div`
   display: flex;
   flex-direction: column;
   padding: 1px 2px 0;
   background: ${PALE};
   margin-left: 1px;
`;

const ResolutionTitle = styled.div`
   text-align: center;
   font-size: 15px;
   line-height: 17px;
`;

const ResolutionValue = styled.div`
   margin: 4px 0 0 27px;
   font-size: 15px;
   line-height: 14px;
   font-weight: 400;
`;

const SliderTrack = styled.div`
   height: 14px;
   flex: none;
   margin-top: 3px;
   padding-left: 25px;
   background: #84b4b4;
   ${raised(PALE_LO, PALE_HI)}
`;

const SliderThumb = styled.div`
   width: 30px;
   height: 100%;
   background: linear-gradient(90deg, ${PALE} 47%, ${PALE_LO} 47%, ${PALE_LO} 53%, ${PALE} 53%);
   ${raised(PALE_HI, PALE_LO, 1)}
`;

const Sash = styled.div`
   position: relative;
   height: 10px;
   flex: none;
   margin: 0 -1px;
`;

const SashHandle = styled.i`
   position: absolute;
   right: 5px;
   top: 1px;
   width: 9px;
   height: 9px;
   background: ${TEAL};
   ${raised(TEAL_HI, TEAL_LO, 1)}
`;

const Preview = styled.div`
   height: 163px;
   flex: none;
   margin-right: 2px;
   background: ${TEAL};
   border: 1px solid #000000;
   border-left: 2px solid ${TEAL_LO};
`;

const PreviewArt = styled.svg`
   display: block;
   width: 100%;
   height: 100%;
`;

const HistStatus = styled.div`
   height: 44px;
   flex: none;
   display: flex;
   align-items: center;
   gap: 4px;
   margin-right: 2px;
   padding-left: 1px;
`;

const MessageBox = styled.div`
   width: 343px;
   height: 41px;
   flex: none;
   margin-left: -2px;
   margin-right: -3px;
   display: flex;
   align-items: center;
   padding-left: 3px;
   background: ${PALE};
   border: 1px solid #000000;
   font-size: 15px;
   white-space: pre;
`;

const HistClose = styled.div`
   height: 26px;
   flex: none;
   display: flex;
   align-items: center;
   justify-content: center;
   margin-top: 0;
   background: ${PALE};
   ${raised(PALE_HI, PALE_LO, 3)}
   font-size: 15px;
`;
